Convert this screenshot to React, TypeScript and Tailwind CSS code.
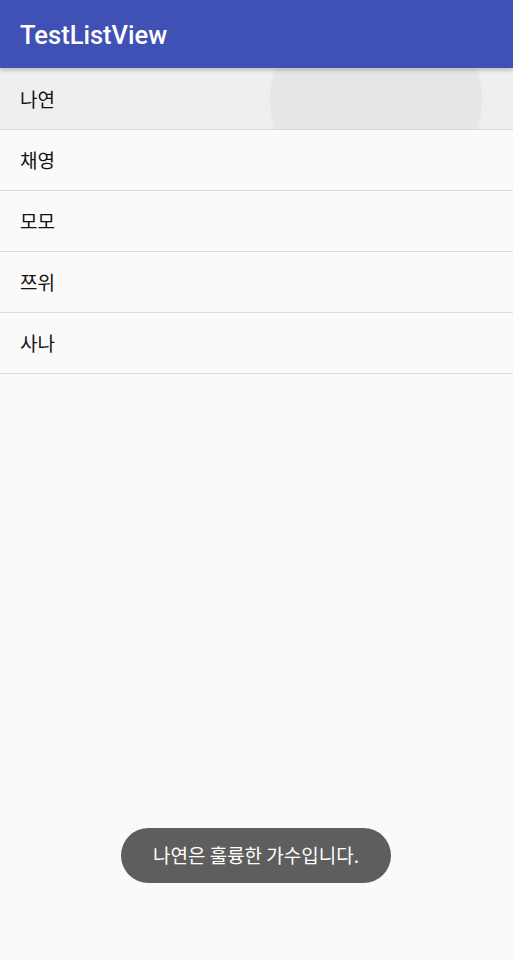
import React from "react";

const items = ["나연", "채영", "모모", "쯔위", "사나"];

export default function App() {
  return (
    <div
      className="relative w-[513px] h-[960px] bg-[#fafafa] overflow-hidden"
      style={{ fontFamily: 'Roboto, "Noto Sans CJK KR", sans-serif' }}
    >
      <div className="relative z-10 h-[68px] bg-[#3f51b5] flex items-center px-[20px] pt-[3px] shadow-[0_2px_4px_rgba(0,0,0,0.25)]">
        <span className="text-white text-[25.5px] font-medium">TestListView</span>
      </div>
      <div className="flex flex-col pt-[1px]">
        {items.map((name, i) => (
          <div
            key={name}
            className={`relative h-[61px] flex items-center px-[20px] border-b border-[#dcdcdc] overflow-hidden ${
              i === 0 ? "bg-[#efefef]" : ""
            }`}
          >
            {i === 0 && (
              <div className="absolute left-[270px] top-[-76px] w-[212px] h-[212px] rounded-full bg-[#e6e6e6]" />
            )}
            <span
              className="relative text-[19px] text-[#111111]"
              style={{ fontFamily: '"Noto Sans CJK KR", sans-serif' }}
            >
              {name}
            </span>
          </div>
        ))}
      </div>
      <div className="absolute left-[121px] top-[828px] w-[270px] h-[55px] rounded-full bg-[#5e5e5e] flex items-center justify-center">
        <span
          className="text-white text-[19px]"
          style={{ fontFamily: '"Noto Sans CJK KR", sans-serif' }}
        >
          나연은 훌륭한 가수입니다.
        </span>
      </div>
    </div>
  );
}
